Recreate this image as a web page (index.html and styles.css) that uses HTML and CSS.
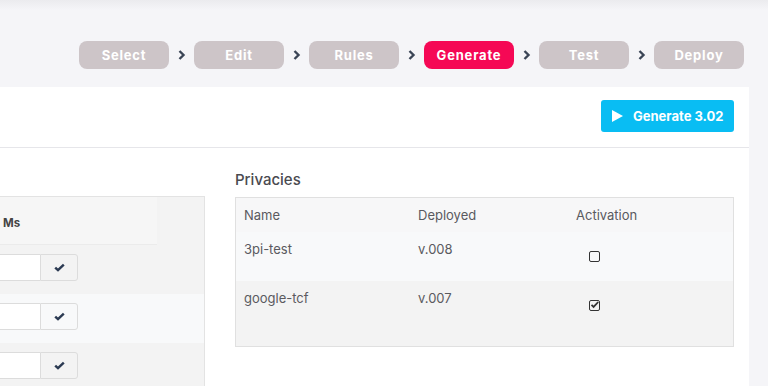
FILE: index.html
```html
<!DOCTYPE html>
<html lang="en">
<head>
    <meta charset="UTF-8">
    <meta name="viewport" content="width=device-width, initial-scale=1.0">
    <title>Generate</title>
    <link rel="stylesheet" href="styles.css">
</head>
<body>
    <div class="topshade"></div>

    <nav class="steps">
        <span class="step">Select</span>
        <span class="sep"><svg width="8" height="10" viewBox="0 0 8 10"><path d="M1.5 1 L5.5 5 L1.5 9" fill="none" stroke="#3b4556" stroke-width="2.4"/></svg></span>
        <span class="step">Edit</span>
        <span class="sep"><svg width="8" height="10" viewBox="0 0 8 10"><path d="M1.5 1 L5.5 5 L1.5 9" fill="none" stroke="#3b4556" stroke-width="2.4"/></svg></span>
        <span class="step">Rules</span>
        <span class="sep"><svg width="8" height="10" viewBox="0 0 8 10"><path d="M1.5 1 L5.5 5 L1.5 9" fill="none" stroke="#3b4556" stroke-width="2.4"/></svg></span>
        <span class="step active">Generate</span>
        <span class="sep"><svg width="8" height="10" viewBox="0 0 8 10"><path d="M1.5 1 L5.5 5 L1.5 9" fill="none" stroke="#3b4556" stroke-width="2.4"/></svg></span>
        <span class="step">Test</span>
        <span class="sep"><svg width="8" height="10" viewBox="0 0 8 10"><path d="M1.5 1 L5.5 5 L1.5 9" fill="none" stroke="#3b4556" stroke-width="2.4"/></svg></span>
        <span class="step">Deploy</span>
    </nav>

    <div class="card">
        <div class="card-head">
            <button class="gen-btn">
                <svg width="11" height="12" viewBox="0 0 11 12"><path d="M0 0 L11 6 L0 12 Z" fill="#fff"/></svg>
                Generate 3.02
            </button>
        </div>
        <div class="card-body">
            <div class="col-left">
                <div class="ms-table">
                    <div class="ms-head"><b>Ms</b></div>
                    <div class="ms-row">
                        <div class="ms-input"></div>
                        <div class="ms-ok"><svg width="11" height="9" viewBox="0 0 11 9"><path d="M1.2 4.6 L4 7.2 L9.8 1.6" fill="none" stroke="#2b3a52" stroke-width="2.4"/></svg></div>
                    </div>
                    <div class="ms-row light">
                        <div class="ms-input"></div>
                        <div class="ms-ok"><svg width="11" height="9" viewBox="0 0 11 9"><path d="M1.2 4.6 L4 7.2 L9.8 1.6" fill="none" stroke="#2b3a52" stroke-width="2.4"/></svg></div>
                    </div>
                    <div class="ms-row">
                        <div class="ms-input"></div>
                        <div class="ms-ok"><svg width="11" height="9" viewBox="0 0 11 9"><path d="M1.2 4.6 L4 7.2 L9.8 1.6" fill="none" stroke="#2b3a52" stroke-width="2.4"/></svg></div>
                    </div>
                </div>
            </div>
            <div class="col-right">
                <h3 class="title">Privacies</h3>
                <table class="priv">
                    <tr class="head">
                        <td class="c-name">Name</td>
                        <td class="c-dep">Deployed</td>
                        <td>Activation</td>
                    </tr>
                    <tr class="r1">
                        <td>3pi-test</td>
                        <td>v.008</td>
                        <td><span class="cb"></span></td>
                    </tr>
                    <tr class="r2">
                        <td>google-tcf</td>
                        <td>v.007</td>
                        <td><span class="cb checked"><svg width="9" height="8" viewBox="0 0 9 8"><path d="M1.5 3.8 L3.6 5.9 L8.2 1" fill="none" stroke="#333" stroke-width="1.8"/></svg></span></td>
                    </tr>
                </table>
            </div>
        </div>
    </div>
</body>
</html>
```

FILE: styles.css
```css
html, body {
    height: 386px;
    overflow: hidden;
}

body {
    margin: 0;
    background: #f5f5f8;
    font-family: "Inter", "Liberation Sans", sans-serif;
    color: #555;
}

.topshade {
    height: 10px;
    background: linear-gradient(#ebebee, #f5f5f8);
}

.steps {
    display: flex;
    justify-content: flex-end;
    align-items: center;
    padding: 31px 24px 0 0;
    height: 28px;
}

.step {
    width: 90px;
    height: 28px;
    line-height: 28px;
    border-radius: 8px;
    background: #cdc5c8;
    color: #fff;
    font-weight: 700;
    font-size: 13px;
    letter-spacing: 0.8px;
    text-align: center;
}

.step.active {
    background: #f50855;
}

.sep {
    width: 25px;
    box-sizing: border-box;
    display: flex;
    justify-content: center;
    padding-left: 1px;
}

.card {
    margin-top: 18px;
    width: 749px;
    background: #fff;
    height: 299px;
}

.card-head {
    height: 61px;
    border-bottom: 1px solid #e6e6ea;
    display: flex;
    justify-content: flex-end;
    align-items: flex-start;
    padding: 13px 15px 0 0;
    box-sizing: border-box;
}

.gen-btn {
    width: 133px;
    height: 32px;
    border: none;
    border-radius: 3px;
    background: #09bdf3;
    color: #fff;
    font-family: inherit;
    font-weight: 700;
    font-size: 13px;
    display: flex;
    align-items: center;
    gap: 10px;
    padding: 0 0 0 11px;
}

.card-body {
    display: flex;
    gap: 30px;
    padding-right: 15px;
}

.col-left {
    width: 205px;
    padding-top: 48px;
}

.ms-table {
    border: 1px solid #e3e3e3;
    border-left: none;
    background: #f3f3f3;
    height: 200px;
}

.ms-head {
    width: 157px;
    height: 48px;
    background: #f6f6f6;
    border-bottom: 1px solid #ebebeb;
    font-size: 11.5px;
    color: #444;
    padding: 19px 0 0 3px;
    box-sizing: border-box;
}

.ms-row {
    height: 49px;
    display: flex;
    align-items: flex-start;
    padding-top: 9px;
    box-sizing: border-box;
}

.ms-row.light {
    background: #f8f9fa;
}

.ms-input {
    width: 40px;
    height: 27px;
    background: #fff;
    border: 1px solid #dcdcdc;
    border-left: none;
    border-right: none;
    box-sizing: border-box;
}

.ms-ok {
    width: 38px;
    height: 27px;
    border: 1px solid #dcdcdc;
    border-radius: 0 3px 3px 0;
    box-sizing: border-box;
    display: flex;
    align-items: center;
    justify-content: center;
}

.col-right {
    flex: 1;
}

.title {
    margin: 22px 0 8px 0;
    font-size: 15px;
    font-weight: 500;
    color: #4a4a50;
    height: 19px;
}

.priv {
    width: 100%;
    border-collapse: collapse;
    border: 1px solid #e0e0e0;
    font-size: 13px;
    color: #5a5a60;
}

.priv td {
    padding: 0 0 0 8px;
    vertical-align: top;
}

.priv .c-name {
    width: 166px;
}

.priv .c-dep {
    width: 150px;
}

.priv .head {
    background: #f7f7f8;
    height: 34px;
}

.priv .head td {
    padding-top: 9px;
}

.priv .r1 {
    background: #f8f9fa;
    height: 49px;
}

.priv .r1 td {
    padding-top: 9px;
}

.priv .r2 {
    background: #f3f3f3;
    height: 66px;
}

.priv .r2 td {
    padding-top: 9px;
}

.cb {
    display: block;
    width: 9px;
    height: 9px;
    border: 1px solid #333;
    border-radius: 2px;
    margin: 10px 0 0 13px;
    position: relative;
}

.cb svg {
    position: absolute;
    left: 0;
    top: 0;
}
```
